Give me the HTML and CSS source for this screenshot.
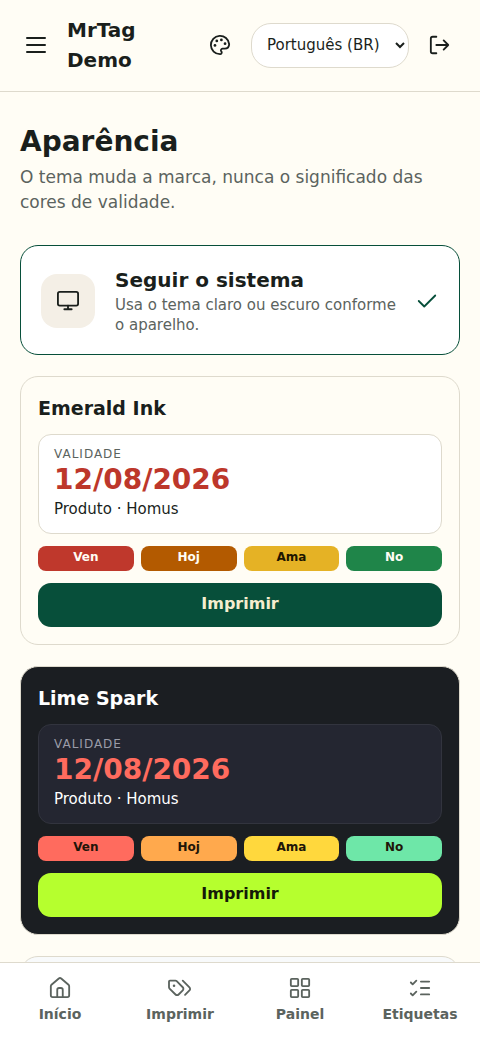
FILE: index.html
```html
<!DOCTYPE html>
<html lang="pt-BR">
<head>
    <meta charset="UTF-8">
    <meta name="viewport" content="width=device-width, initial-scale=1">
    <title>Aparência</title>
    <link rel="stylesheet" href="styles.css">
</head>
<body>
<header class="topbar">
    <button class="icon-button" type="button" aria-label="Menu">
        <svg class="icon" viewBox="0 0 22 22"><path d="M2 4h18M2 11h18M2 18h18"/></svg>
    </button>
    <div class="brand">MrTag Demo</div>
    <button class="icon-button" type="button" aria-label="Aparência">
        <svg class="icon" viewBox="0 0 24 24">
            <path d="M12 22a10 10 0 1 1 10-11c0 3-2 5-5 5h-2.300a1.800 1.800 0 0 0-1.400 2.800l.3.400A1.800 1.800 0 0 1 12 22z"/>
            <g class="dots"><circle cx="13.500" cy="6.500" r="1.500"/><circle cx="17.500" cy="10.500" r="1.500"/><circle cx="8.500" cy="7.500" r="1.500"/><circle cx="6.500" cy="12.500" r="1.500"/></g>
        </svg>
    </button>
    <select class="language" aria-label="Idioma">
        <option>Português (BR)</option>
    </select>
    <button class="icon-button" type="button" aria-label="Sair">
        <svg class="icon" viewBox="0 0 24 24"><path d="M8 3H4a2 2 0 0 0-2 2v14a2 2 0 0 0 2 2h4M16 17l5-5-5-5M21 12H8"/></svg>
    </button>
</header>

<main class="content">
    <div class="heading">
        <h1>Aparência</h1>
        <p>O tema muda a marca, nunca o significado das cores de validade.</p>
    </div>

    <button class="system" type="button" aria-pressed="true">
        <span class="system-icon">
            <svg class="icon" viewBox="0 0 24 24"><rect x="1" y="2" width="22" height="15" rx="2"/><path d="M8 21h8M12 17v4"/></svg>
        </span>
        <span class="system-text">
            <strong>Seguir o sistema</strong>
            <span>Usa o tema claro ou escuro conforme o aparelho.</span>
        </span>
        <svg class="icon check" viewBox="0 0 24 24"><path d="M21 6 9 18l-6-6"/></svg>
    </button>

    <article class="theme emerald">
        <h2>Emerald Ink</h2>
        <div class="label">
            <span class="caption">VALIDADE</span>
            <span class="date">12/08/2026</span>
            <span class="product">Produto · Homus</span>
        </div>
        <div class="chips">
            <span class="chip expired">Ven</span>
            <span class="chip today">Hoj</span>
            <span class="chip tomorrow">Ama</span>
            <span class="chip valid">No</span>
        </div>
        <button class="print" type="button">Imprimir</button>
    </article>

    <article class="theme lime">
        <h2>Lime Spark</h2>
        <div class="label">
            <span class="caption">VALIDADE</span>
            <span class="date">12/08/2026</span>
            <span class="product">Produto · Homus</span>
        </div>
        <div class="chips">
            <span class="chip expired">Ven</span>
            <span class="chip today">Hoj</span>
            <span class="chip tomorrow">Ama</span>
            <span class="chip valid">No</span>
        </div>
        <button class="print" type="button">Imprimir</button>
    </article>

    <article class="theme frost"></article>
</main>

<nav class="tabs">
    <a href="#">
        <svg class="icon" viewBox="0 0 24 24"><path d="M15 22v-8a2 2 0 0 0-2-2h-2a2 2 0 0 0-2 2v8"/><path d="M2 10a2 2 0 0 1 .7-1.500l8-6.800a2 2 0 0 1 2.600 0l8 6.800A2 2 0 0 1 22 10v10a2 2 0 0 1-2 2H4a2 2 0 0 1-2-2z"/></svg>
        Início
    </a>
    <a href="#">
        <svg class="icon" viewBox="0 0 24 24"><path d="M0 5a1 1 0 0 1 1-1h6a2 2 0 0 1 1.400.6l6.600 6.600a2.400 2.400 0 0 1 0 3.400l-4.500 4.500a2.400 2.400 0 0 1-3.400 0l-6.500-6.500A2 2 0 0 1 0 11.200z"/><path d="m15 4 7.300 7.300a2.400 2.400 0 0 1 0 3.400L17.500 19.500"/><circle class="dot" cx="5.500" cy="9.500" r="1.400"/></svg>
        Imprimir
    </a>
    <a href="#">
        <svg class="icon" viewBox="0 0 24 24"><rect x="2" y="2" width="8" height="8" rx="1"/><rect x="14" y="2" width="8" height="8" rx="1"/><rect x="2" y="14" width="8" height="8" rx="1"/><rect x="14" y="14" width="8" height="8" rx="1"/></svg>
        Painel
    </a>
    <a href="#">
        <svg class="icon" viewBox="0 0 24 24"><path d="M13 5h9M13 12h9M13 19h9M2 18l2 2 4-4M2 6l2 2 4-4"/></svg>
        Etiquetas
    </a>
</nav>
</body>
</html>
```
FILE: styles.css
```css
* {
    box-sizing: border-box;
}
body {
    margin: 0;
    height: 100vh;
    display: flex;
    flex-direction: column;
    overflow: hidden;
    background: #fffdf5;
    color: #1a1f1c;
    font-family: "DejaVu Sans", sans-serif;
}
button {
    padding: 0;
    border: 0;
    background: none;
    color: inherit;
    font-family: inherit;
}
.icon {
    width: 22px;
    height: 22px;
    flex: none;
    overflow: visible;
    fill: none;
    stroke: currentColor;
    stroke-width: 2;
    stroke-linecap: round;
    stroke-linejoin: round;
}
.dots, .dot {
    fill: currentColor;
    stroke: none;
}

/* top bar */
.topbar {
    display: flex;
    align-items: center;
    gap: 9px;
    padding: 15px 18px 16px 14px;
    border-bottom: 1px solid #dedacd;
}
.icon-button {
    display: flex;
    flex: none;
    align-items: center;
    justify-content: center;
    width: 44px;
    height: 44px;
}
.brand {
    flex: 1;
    font-size: 20px;
    font-weight: bold;
    line-height: 30px;
}
.language {
    width: 158px;
    height: 45px;
    padding: 0 0 0 11px;
    border: 1px solid #dedacd;
    border-radius: 20px;
    background: #fff;
    color: inherit;
    font-family: inherit;
    font-size: 15px;
}

/* page */
.content {
    flex: 1;
    min-height: 0;
    display: flex;
    flex-direction: column;
    gap: 21px;
    padding: 27px 20px;
    overflow-y: auto;
    scrollbar-width: none;
}
.content > * {
    flex: none;
}
.heading {
    margin-bottom: 9px;
}
h1, h2, p {
    margin: 0;
}
h1 {
    font-size: 28px;
    line-height: 46px;
}
p {
    color: #5b635e;
    font-size: 17px;
    line-height: 25px;
}
.system {
    display: flex;
    align-items: center;
    gap: 20px;
    padding: 20px 21px 19px 20px;
    border: 1px solid #074f3a;
    border-radius: 18px;
    background: #fff;
    text-align: left;
}
.system-icon {
    display: flex;
    flex: none;
    align-items: center;
    justify-content: center;
    width: 54px;
    height: 54px;
    border-radius: 16px;
    background: #f4efe6;
}
.system-text {
    flex: 1;
    display: flex;
    flex-direction: column;
    gap: 1px;
    color: #5b635e;
    font-size: 15px;
    line-height: 20px;
}
.system-text strong {
    color: #1a1f1c;
    font-size: 20px;
    line-height: 28px;
}
.check {
    color: #074f3a;
}

/* theme previews */
.theme {
    display: flex;
    flex-direction: column;
    gap: 12px;
    padding: 17px;
    border: 1px solid #dedacd;
    border-radius: 18px;
}
h2 {
    font-size: 19px;
    line-height: 28px;
}
.label {
    display: flex;
    flex-direction: column;
    padding: 10px 15px 11px;
    border: 1px solid #dedacd;
    border-radius: 13px;
}
.caption {
    font-size: 12px;
    line-height: 19px;
    letter-spacing: 1px;
}
.date {
    font-size: 28px;
    font-weight: bold;
    line-height: 32px;
}
.product {
    font-size: 15px;
    line-height: 26px;
}
.chips {
    display: grid;
    grid-template-columns: repeat(4, 1fr);
    gap: 7px;
}
.chip {
    height: 25px;
    border-radius: 8px;
    font-size: 12px;
    font-weight: bold;
    line-height: 22px;
    text-align: center;
}
.print {
    height: 44px;
    padding-bottom: 4px;
    border-radius: 13px;
    font-size: 16px;
    font-weight: bold;
}
.emerald .label {
    background: #fff;
}
.emerald .caption {
    color: #5b635e;
}
.emerald .date {
    color: #bd372b;
}
.emerald .chip {
    color: #fffdf5;
}
.emerald .expired {
    background: #bf382c;
}
.emerald .today {
    background: #b35a00;
}
.emerald .tomorrow {
    background: #e5b225;
    color: #1f1600;
}
.emerald .valid {
    background: #1f8549;
}
.emerald .print {
    background: #074f3a;
    color: #f5edcf;
}
.lime {
    background: #1b1e22;
    color: #fff;
}
.lime .label {
    border-color: #32343e;
    background: #242631;
}
.lime .caption {
    color: #9a9ca8;
}
.lime .date {
    color: #ff6b5e;
}
.lime .chip {
    color: #211508;
}
.lime .expired {
    background: #ff6b5e;
}
.lime .today {
    background: #ffa94d;
}
.lime .tomorrow {
    background: #ffd83d;
}
.lime .valid {
    background: #6ee7a8;
}
.lime .print {
    background: #b6ff2e;
    color: #141a08;
}
.frost {
    background: #f8fafb;
}

/* bottom navigation */
.tabs {
    display: grid;
    grid-template-columns: repeat(4, 1fr);
    padding: 14px 0 13px;
    border-top: 1px solid #dedacd;
    background: #fff;
}
.tabs a {
    display: flex;
    flex-direction: column;
    align-items: center;
    gap: 4px;
    color: #5b635e;
    font-size: 14px;
    font-weight: bold;
    line-height: 22px;
    text-decoration: none;
}
```
